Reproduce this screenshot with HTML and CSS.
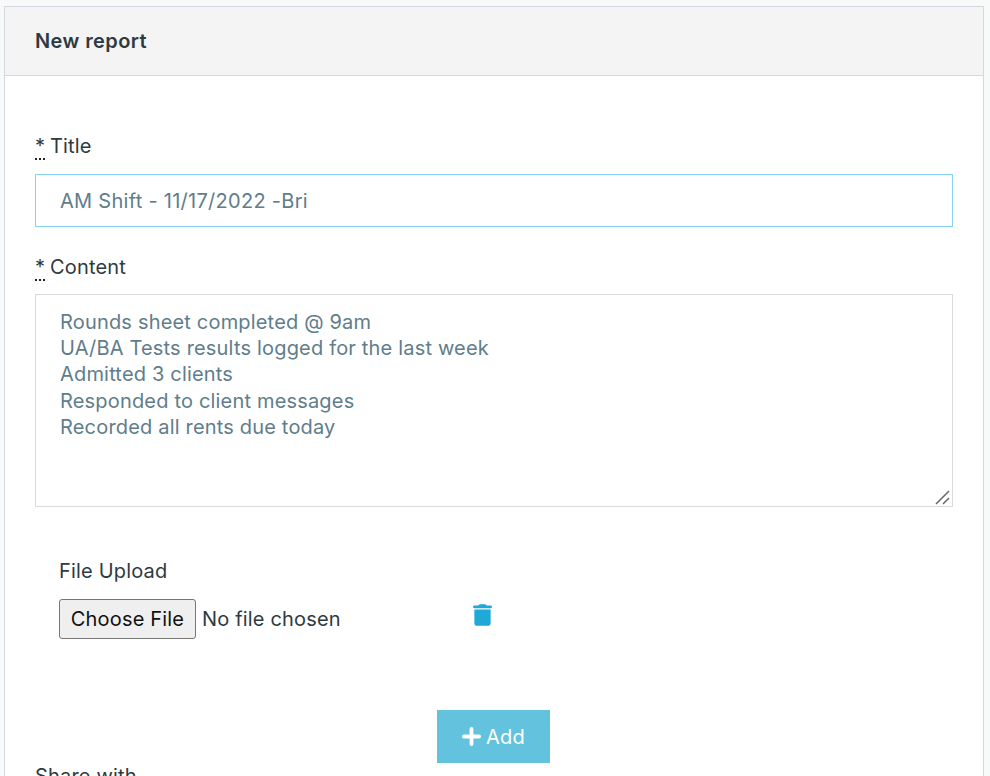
FILE: index.html
```html
<!DOCTYPE html>
<html lang="en">

<head>
    <meta charset="UTF-8">
    <meta name="viewport" content="width=device-width, initial-scale=1.0">
    <title>New report</title>
    <link rel="stylesheet" href="styles.css">
</head>

<body>
    <div class="card">
        <div class="card-header">New report</div>
        <form class="card-body">
            <label class="field-label" for="title"><abbr class="req" title="required">*</abbr> Title</label>
            <input id="title" class="field field-focus" type="text" value="AM Shift - 11/17/2022 -Bri">

            <label class="field-label content-label" for="content"><abbr class="req" title="required">*</abbr> Content</label>
            <div class="area-wrap">
                <textarea id="content" class="field field-area">Rounds sheet completed @ 9am
UA/BA Tests results logged for the last week
Admitted 3 clients
Responded to client messages
Recorded all rents due today</textarea>
                <svg class="grip" viewBox="0 0 15 15" aria-hidden="true">
                    <path d="M1 14L14 1M8 14L14 8" />
                </svg>
            </div>

            <div class="upload">
                <label class="field-label" for="file">File Upload</label>
                <div class="upload-row">
                    <input id="file" class="file-input" type="file">
                    <svg class="trash" viewBox="0 0 448 512" aria-hidden="true">
                        <path d="M135.200 17.700C140.600 6.800 151.700 0 163.800 0H284.200c12.100 0 23.200 6.800 28.600 17.700L320 32h96c17.700 0 32 14.300 32 32s-14.300 32-32 32H32C14.300 96 0 81.700 0 64S14.300 32 32 32h96l7.200-14.300zM32 128H416V448c0 35.300-28.700 64-64 64H96c-35.300 0-64-28.700-64-64V128z" />
                    </svg>
                </div>
            </div>

            <div class="actions">
                <button class="btn-add" type="button">
                    <svg class="plus" viewBox="0 0 20 20" aria-hidden="true">
                        <path d="M10 2v16M2 10h16" />
                    </svg>
                    Add
                </button>
            </div>

            <label class="field-label share-label">Share with</label>
        </form>
    </div>
</body></html>
```

FILE: styles.css
```css
html, body {
    height: 776px;
    overflow: hidden;
}

body {
    margin: 0;
    padding: 6px 6px 0 4px;
    box-sizing: border-box;
    background: #f8f9f9;
    font-family: Inter, "Liberation Sans", sans-serif;
    font-size: 20px;
    letter-spacing: .18px;
    color: #2f3a40;
}

.card {
    background: #fff;
    border: 1px solid #d3dadf;
    border-bottom: 0;
    height: 100%;
    box-sizing: border-box;
}

.card-header {
    height: 69px;
    padding: 0 30px 1px;
    display: flex;
    align-items: center;
    background: #f4f4f4;
    border-bottom: 1px solid #d3dadf;
    font-weight: 600;
    letter-spacing: .4px;
    box-sizing: border-box;
}

.card-body {
    padding: 57px 30px 0;
}

.field-label {
    display: block;
    line-height: 26px;
    margin-bottom: 15px;
}

.content-label {
    margin-top: 27px;
    margin-bottom: 14px;
}

.req {
    margin-right: -1px;
    text-decoration: none;
    border-bottom: 2px dotted #222;
}

.field {
    display: block;
    width: 100%;
    box-sizing: border-box;
    padding: 0 24px;
    border: 1px solid #d8dcde;
    border-radius: 0;
    background: #fff;
    font-family: inherit;
    font-size: 20px;
    letter-spacing: .18px;
    line-height: 26.300px;
    color: #607d8b;
    outline: none;
}

.field-focus {
    height: 53px;
    border-color: #85d5f2;
    letter-spacing: .28px;
}

.area-wrap {
    position: relative;
}

.field-area {
    height: 213px;
    padding-top: 13.700px;
    resize: none;
}

.grip {
    position: absolute;
    right: 3px;
    bottom: 2px;
    width: 15px;
    height: 15px;
    stroke: #666;
    stroke-width: 1.500;
    fill: none;
}

.upload {
    padding: 51px 24px 0;
}

.upload .field-label {
    margin-bottom: 15px;
}

.upload-row {
    display: flex;
    align-items: flex-start;
}

.file-input {
    width: 414px;
    font-family: inherit;
    font-size: 20px;
    letter-spacing: .18px;
    color: #2f3a40;
}

.file-input::file-selector-button {
    height: 40px;
    width: 137px;
    margin-right: 6px;
    border: 1px solid #767676;
    border-radius: 3px;
    background: #efefef;
    font-family: inherit;
    font-size: 20px;
    letter-spacing: .18px;
    color: #111;
}

.trash {
    width: 19px;
    height: 22px;
    margin-top: 5px;
    fill: #20a8d8;
}

.actions {
    display: flex;
    justify-content: center;
    margin-top: 71px;
    padding-right: 2px;
}

.btn-add {
    width: 113px;
    height: 53px;
    padding: 0 0 0 1px;
    border: 0;
    background: #63c2de;
    color: #fff;
    font-family: inherit;
    font-size: 20px;
    letter-spacing: .18px;
    display: flex;
    align-items: center;
    justify-content: center;
    gap: 5px;
}

.plus {
    width: 19px;
    height: 19px;
    stroke: #fff;
    stroke-width: 4;
    stroke-linecap: round;
    fill: none;
}

.share-label {
    margin-top: 0;
}
```
